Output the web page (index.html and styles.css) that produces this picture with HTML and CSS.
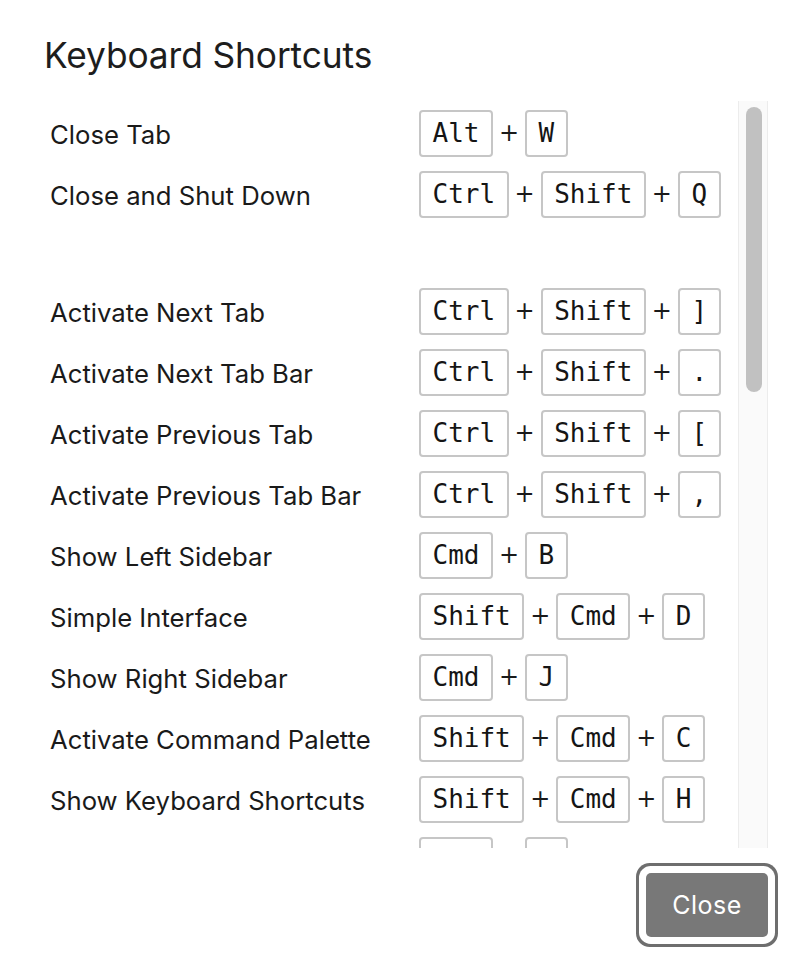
FILE: index.html
```html
<!DOCTYPE html>
<html>
<head>
<meta charset="utf-8">
<link rel="stylesheet" href="styles.css">
</head>
<body>
<div class="dialog">
  <h1 class="title">Keyboard Shortcuts</h1>
  <div class="scroll">
    <div class="list">
      <div class="row"><div class="label">Close Tab</div><div class="keys"><kbd>Alt</kbd><span class="plus">+</span><kbd>W</kbd></div></div>
      <div class="row"><div class="label">Close and Shut Down</div><div class="keys"><kbd>Ctrl</kbd><span class="plus">+</span><kbd>Shift</kbd><span class="plus">+</span><kbd>Q</kbd></div></div>
      <div class="spacer"></div>
      <div class="row"><div class="label">Activate Next Tab</div><div class="keys"><kbd>Ctrl</kbd><span class="plus">+</span><kbd>Shift</kbd><span class="plus">+</span><kbd>]</kbd></div></div>
      <div class="row"><div class="label">Activate Next Tab Bar</div><div class="keys"><kbd>Ctrl</kbd><span class="plus">+</span><kbd>Shift</kbd><span class="plus">+</span><kbd>.</kbd></div></div>
      <div class="row"><div class="label">Activate Previous Tab</div><div class="keys"><kbd>Ctrl</kbd><span class="plus">+</span><kbd>Shift</kbd><span class="plus">+</span><kbd>[</kbd></div></div>
      <div class="row"><div class="label">Activate Previous Tab Bar</div><div class="keys"><kbd>Ctrl</kbd><span class="plus">+</span><kbd>Shift</kbd><span class="plus">+</span><kbd>,</kbd></div></div>
      <div class="row"><div class="label">Show Left Sidebar</div><div class="keys"><kbd>Cmd</kbd><span class="plus">+</span><kbd>B</kbd></div></div>
      <div class="row"><div class="label">Simple Interface</div><div class="keys"><kbd>Shift</kbd><span class="plus">+</span><kbd>Cmd</kbd><span class="plus">+</span><kbd>D</kbd></div></div>
      <div class="row"><div class="label">Show Right Sidebar</div><div class="keys"><kbd>Cmd</kbd><span class="plus">+</span><kbd>J</kbd></div></div>
      <div class="row"><div class="label">Activate Command Palette</div><div class="keys"><kbd>Shift</kbd><span class="plus">+</span><kbd>Cmd</kbd><span class="plus">+</span><kbd>C</kbd></div></div>
      <div class="row"><div class="label">Show Keyboard Shortcuts</div><div class="keys"><kbd>Shift</kbd><span class="plus">+</span><kbd>Cmd</kbd><span class="plus">+</span><kbd>H</kbd></div></div>
      <div class="row"><div class="label">Hide Sidebars</div><div class="keys"><kbd>Cmd</kbd><span class="plus">+</span><kbd>K</kbd></div></div>
    </div>
    <div class="scrollbar"><div class="thumb"></div></div>
  </div>
  <div class="footer">
    <button class="btn">Close</button>
  </div>
</div>
</body>
</html>
```

FILE: styles.css
```css
html, body {
  margin: 0;
  padding: 0;
  background: #ffffff;
}
body {
  font-family: Inter, "Liberation Sans", sans-serif;
  color: #1a1a1a;
}
.dialog {
  padding: 0 34px 0 44px;
  height: 976px;
  box-sizing: border-box;
}
.title {
  margin: 0;
  padding-top: 35px;
  font-size: 35.3px;
  font-weight: 400;
  line-height: 42px;
  height: 66px;
  color: #1d1d1d;
  letter-spacing: -0.1px;
}
.scroll {
  display: flex;
  height: 747px;
}
.list {
  flex: 1;
  overflow: hidden;
  padding: 9px 0 0 6px;
  display: flex;
  flex-direction: column;
  gap: 14px;
}
.row {
  display: grid;
  grid-template-columns: 369px auto;
  align-items: center;
  height: 47px;
  flex: none;
}
.spacer {
  height: 42px;
  flex: none;
}
.label {
  font-size: 25.7px;
  color: #1a1a1a;
  padding-top: 2px;
}
.keys {
  display: flex;
  align-items: center;
}
kbd {
  font-family: "DejaVu Sans Mono", monospace;
  font-size: 26px;
  line-height: 43px;
  height: 43px;
  padding: 0 11.5px;
  border: 2px solid #c6c6c6;
  border-radius: 4px;
  color: #151515;
  background: #fff;
}
.plus {
  font-family: "DejaVu Sans", sans-serif;
  font-size: 24px;
  line-height: 30px;
  width: 32px;
  text-align: center;
  color: #1a1a1a;
  padding-bottom: 1px;
}
.scrollbar {
  width: 28px;
  flex: none;
  background: #fafafa;
  border-left: 1px solid #ececec;
  border-right: 1px solid #ececec;
}
.thumb {
  margin: 6px 0 0 7px;
  width: 16px;
  height: 285px;
  border-radius: 8px;
  background: #c1c1c1;
}
.footer {
  display: flex;
  justify-content: flex-end;
  padding-top: 25px;
}
.btn {
  width: 122px;
  height: 64px;
  border: none;
  border-radius: 5px;
  background: #787878;
  color: #ffffff;
  font-family: Inter, "Liberation Sans", sans-serif;
  font-size: 25px;
  letter-spacing: 0.5px;
  box-shadow: 0 0 0 7px #ffffff, 0 0 0 10px #6e6e6e;
}
```
